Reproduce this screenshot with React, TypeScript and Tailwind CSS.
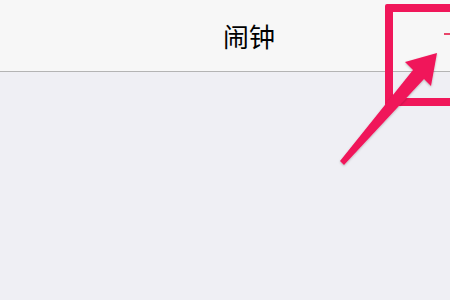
import React from "react";

const cjk = { fontFamily: '"Noto Sans CJK SC", "Noto Sans", sans-serif' };

function Arrow() {
  return (
    <svg className="absolute left-0 top-0 pointer-events-none" width={450} height={300} viewBox="0 0 450 300">
      <defs>
        <filter id="sh" x="-20%" y="-20%" width="140%" height="140%">
          <feDropShadow dx="0" dy="1" stdDeviation="1" floodColor="#000" floodOpacity="0.25" />
        </filter>
      </defs>
      <polygon
        points="340,161 413,70 405,62 437,53 431,86 424,79 344,165"
        fill="#f0175a"
        filter="url(#sh)"
      />
    </svg>
  );
}

export default function App() {
  return (
    <div className="relative w-[450px] h-[300px] overflow-hidden bg-[#efeff4]" style={cjk}>
      {/* 导航栏 */}
      <div className="flex items-center h-[72px] pl-[223px] bg-[#f7f7f7] border-b border-[#b4b4b4]">
        <span className="text-[26px] leading-none text-black">闹钟</span>
      </div>
      <div className="h-[227px] bg-[#efeff4]" />

      {/* 右上角 "+" 按钮，只露出一部分 */}
      <div className="absolute left-[444px] top-[33px] w-[8px] h-[2px] bg-[#e8466a]" />

      {/* 红框标注 */}
      <div className="absolute left-[385px] top-[4px] w-[80px] h-[102px] border-[8px] border-[#f0175a] rounded-[2px]" />
      <Arrow />
    </div>
  );
}
